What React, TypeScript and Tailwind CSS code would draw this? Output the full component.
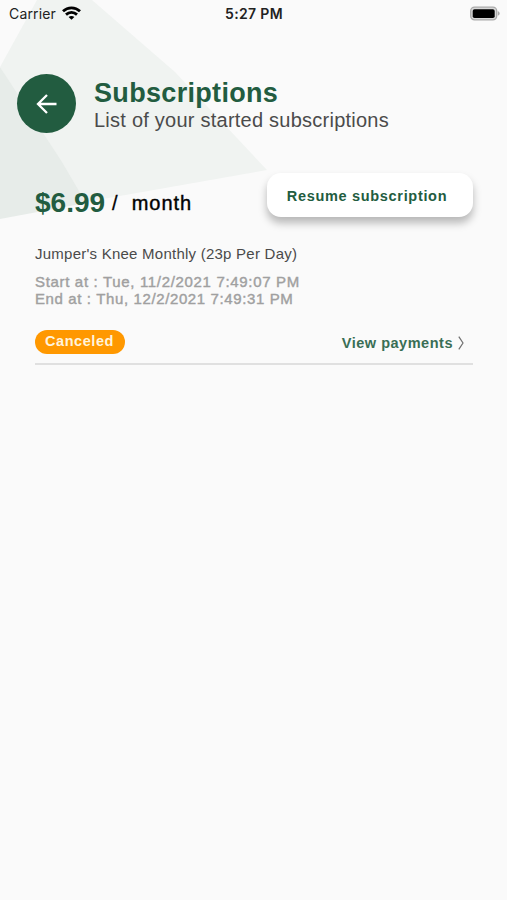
import React from "react";

const subscription = {
  price: "$6.99",
  period: "month",
  name: "Jumper's Knee Monthly (23p Per Day)",
  start: "Tue, 11/2/2021 7:49:07 PM",
  end: "Thu, 12/2/2021 7:49:31 PM",
  status: "Canceled",
};

const Background: React.FC = () => (
  <svg className="absolute left-0 top-0 -z-10" width="270" height="224" viewBox="0 0 270 224">
    <path d="M37 0H92L175 72L267 170L80 203L0 67Z" fill="#f0f3f1" />
    <path d="M0 67L62 162L86 203L0 219Z" fill="#e7ece9" />
  </svg>
);

const StatusBar: React.FC = () => (
  <div className="grid h-[26px] grid-cols-3 items-center pl-[9px] pr-[7px] font-['Inter','Liberation_Sans',sans-serif] text-[14px] text-[#222]">
    <div className="flex items-center gap-[6px]">
      <span className="tracking-[0.15px]">Carrier</span>
      <svg width="19" height="14" viewBox="0 0 19 14" fill="none" stroke="#000" strokeWidth="2.8">
        <path d="M1 5.3C5.8 0.7 13.2 0.7 18 5.3" />
        <path d="M4 8.6C7.2 5.7 11.8 5.7 15 8.6" />
        <path d="M6.6 11C8.3 9.5 10.7 9.5 12.4 11L9.5 13.8Z" fill="#000" stroke="none" />
      </svg>
    </div>
    <span className="pr-px text-center font-semibold tracking-[0.35px]">5:27 PM</span>
    <svg className="justify-self-end" width="31" height="15" viewBox="0 0 31 15">
      <rect x="1.7" y="1.2" width="26" height="12.6" rx="3.8" fill="#d8d8d8" stroke="#aaa" strokeWidth="1.3" />
      <rect x="3.7" y="3.2" width="22" height="8.8" rx="1.8" fill="#000" />
      <path d="M28.8 5.3C31.3 6 31.3 9 28.8 9.7Z" fill="#aaa" />
    </svg>
  </div>
);

const Header: React.FC = () => (
  <header className="mt-[48px] flex items-center pl-[17px]">
    <button aria-label="back" className="flex h-[59px] w-[59px] items-center justify-center rounded-full bg-[#225c40]">
      <svg width="22" height="22" viewBox="0 0 22 22" fill="none" stroke="#fff" strokeWidth="2.3">
        <path d="M20.5 11H2.5M11 2L2 11L11 20" />
      </svg>
    </button>
    <div className="ml-[18px] pt-[5px]">
      <h1 className="text-[27px] leading-[28px] font-bold tracking-[0.32px] text-[#225c40]">Subscriptions</h1>
      <p className="text-[20px] leading-[26px] tracking-[0.24px] text-[#4b4b4b]">List of your started subscriptions</p>
    </div>
  </header>
);

const SubscriptionItem: React.FC = () => (
  <div className="ml-[35px] mt-[40px] mr-[34px] border-b-2 border-[#e0e0e0] pb-[8px]">
    <div className="flex items-start justify-between">
      <div className="mt-[14px] flex text-black">
        <span className="text-[28px] leading-[32px] font-bold text-[#225c40]">{subscription.price}</span>
        <span className="ml-[7px] text-[20px] leading-[33px] [-webkit-text-stroke:0.3px]">/</span>
        <span className="ml-[14px] text-[20px] leading-[33px] tracking-[1px] [-webkit-text-stroke:0.4px]">{subscription.period}</span>
      </div>
      <button className="h-[44px] w-[206px] rounded-[14px] bg-white pt-[3px] pr-[6px] text-[14.5px] font-bold tracking-[0.68px] text-[#225c40] shadow-[0_6px_8px_rgba(0,0,0,0.27)]">
        Resume subscription
      </button>
    </div>
    <p className="mt-[24px] text-[15px] leading-[20px] tracking-[0.24px] text-[#4a4a4a]">{subscription.name}</p>
    <div className="mt-[9px] text-[15px] leading-[17px] tracking-[0.67px] text-[#a0a0a0] [-webkit-text-stroke:0.4px]">
      <p>Start at : {subscription.start}</p>
      <p className="tracking-[0.62px]">End at : {subscription.end}</p>
    </div>
    <div className="mt-[22px] flex items-center justify-between">
      <span className="flex h-[24px] w-[90px] items-start justify-center rounded-full bg-[#ff9800] pr-[1px] text-[14.5px] leading-[23px] font-bold tracking-[0.55px] text-[#fff3dd]">
        {subscription.status}
      </span>
      <a className="flex items-center gap-[5px] pr-[9px] pt-[4px] text-[14.5px] font-bold tracking-[0.52px] text-[#396e55]">
        View payments
        <svg className="-mt-[2px]" width="6" height="14" viewBox="0 0 6 14" fill="none" stroke="#707070" strokeWidth="1.2">
          <path d="M0.8 0.6L5 7L0.8 13.4" />
        </svg>
      </a>
    </div>
  </div>
);

const App: React.FC = () => {
  return (
    <main className="relative isolate min-h-screen w-full overflow-hidden bg-[#fafafa] font-['Liberation_Sans',Arial,sans-serif]">
      <Background />
      <StatusBar />
      <Header />
      <SubscriptionItem />
    </main>
  );
};

export default App;
